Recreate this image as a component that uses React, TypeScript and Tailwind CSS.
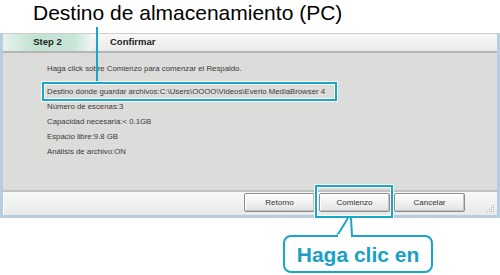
import React from 'react'

const rows = [
    'Número de escenas:3',
    'Capacidad necesaria:< 0.1GB',
    'Espacio libre:9.8 GB',
    'Análisis de archivo:ON',
]

function Btn({ label }: { label: string }) {
    return (
        <button className="w-[71px] h-[19px] rounded-[2px] border border-[#8e8e8e] bg-[linear-gradient(#ffffff,#f1f1f1_50%,#e2e2e2)] shadow-[inset_-1px_-1px_0_#c4c4c4,inset_1px_1px_0_#ffffff] text-[8px] leading-[17px] text-[#333]">
            {label}
        </button>
    )
}

export default function App() {
    return (
        <div className="relative w-[500px] h-[275px] bg-white overflow-hidden font-['Liberation_Sans',Arial,sans-serif]">
            <div className="h-[33px] pt-[2px] pl-[33px] text-[21px] leading-[21px] text-black">
                Destino de almacenamiento (PC)
            </div>

            <div className="w-[500px] border-x-[3px] border-b-[3px] border-[#b6cee0]">
                <div className="flex h-[20px] border-t border-[#cdcdcd] border-b-2 border-b-[#b5b5b5] bg-[linear-gradient(#f8f8f8,#eaeaea)]">
                    <div className="w-[89px] flex items-center justify-center text-[9.5px] font-bold text-[#222] bg-[linear-gradient(90deg,#e6f2ec,#c2e2d2_35%,#c8e5d7_80%,#eef6f2)]">
                        Step 2
                    </div>
                    <div className="flex items-center pl-[18px] text-[9.5px] font-bold text-[#222]">Confirmar</div>
                </div>

                <div className="h-[137px] bg-[#dcdcdb] pt-[8px] pl-[44px] text-[7.8px] leading-[15px] text-[#3a3a3a]">
                    <div>Haga click sobre Comienzo para comenzar el Respaldo.</div>
                    <div className="mt-[8px]">{'Destino donde guardar archivos:C:\\Users\\OOOO\\Videos\\Everio MediaBrowser 4'}</div>
                    {rows.map((r) => (
                        <div key={r}>{r}</div>
                    ))}
                </div>

                <div className="h-[2px] bg-[#c2c2c2]" />

                <div className="relative h-[23px] flex gap-[4px] pt-[1px] pl-[240px] bg-[linear-gradient(#f7f8f8,#e9e9e9)] border-l border-white">
                    <Btn label="Retorno" />
                    <Btn label="Comienzo" />
                    <Btn label="Cancelar" />
                    <svg className="absolute right-[2px] bottom-[2px]" width="9" height="9" viewBox="0 0 9 9">
                        <g fill="#b8b8b8">
                            <rect x="7" y="1" width="1" height="1" />
                            <rect x="5" y="3" width="1" height="1" />
                            <rect x="7" y="3" width="1" height="1" />
                            <rect x="3" y="5" width="1" height="1" />
                            <rect x="5" y="5" width="1" height="1" />
                            <rect x="7" y="5" width="1" height="1" />
                            <rect x="1" y="7" width="1" height="1" />
                            <rect x="3" y="7" width="1" height="1" />
                            <rect x="5" y="7" width="1" height="1" />
                            <rect x="7" y="7" width="1" height="1" />
                        </g>
                    </svg>
                </div>
            </div>

            {/* annotations */}
            <div className="absolute left-[96px] top-[27px] w-[2px] h-[55px] bg-[#17a6cc]" />
            <div className="absolute left-[42px] top-[82px] w-[295px] h-[19px] border-2 border-[#17a6cc] shadow-[inset_0_0_0_1px_#ffffff,0_0_0_1px_#ffffff]" />
            <div className="absolute left-[315px] top-[185px] w-[78px] h-[33px] border-2 border-[#17a6cc] shadow-[inset_0_0_0_1px_#ffffff,0_0_0_1px_#ffffff]" />

            <svg className="absolute left-0 top-0" width="500" height="275" viewBox="0 0 500 275">
                <path d="M337 237 L348 218 L351 218 L352 237 Z" fill="#ffffff" />
                <path d="M337 236 L348 218 M351 218 L352 236" stroke="#17a6cc" strokeWidth="2" fill="none" />
            </svg>

            <div className="absolute left-[283px] top-[235px] w-[150px] h-[38px] rounded-[8px] border-2 border-[#17a6cc] bg-white flex items-center justify-center text-[21px] font-bold text-[#1aa0c6] leading-none">
                Haga clic en
            </div>
            <div className="absolute left-[338px] top-[234px] w-[13px] h-[3px] bg-white" />
        </div>
    )
}
